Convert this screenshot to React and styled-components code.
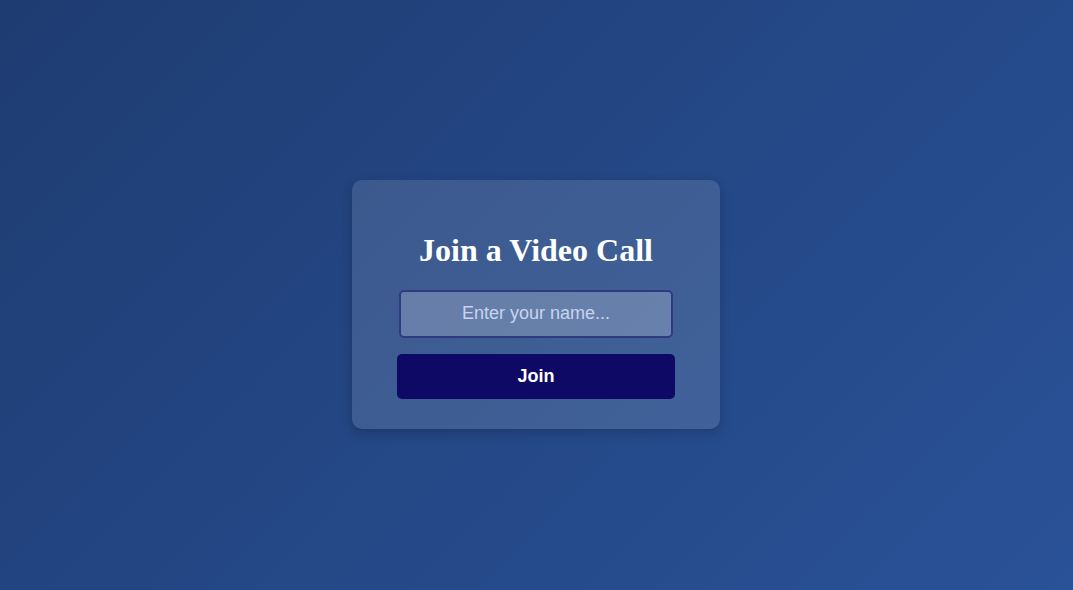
import React, { useState } from 'react';
import styled, { createGlobalStyle } from 'styled-components';

const GlobalStyle = createGlobalStyle`
  html {
    background: linear-gradient(135deg, #1e3c72 0%, #2a5298 100%);
    min-height: 100%;
  }

  body {
    margin: 8px;
    min-height: calc(100vh - 16px);
    display: flex;
    align-items: center;
    justify-content: center;
    font-family: "Liberation Serif", "Times New Roman", serif;
  }

  #root {
    display: flex;
    justify-content: center;
    align-items: center;
    padding: 18px 1px 0 0;
  }
`;

const Card = styled.div`
  width: 368px;
  box-sizing: border-box;
  padding: 30px 45px;
  background-color: rgba(255, 255, 255, 0.12);
  border-radius: 10px;
  box-shadow: 0 4px 12px rgba(0, 0, 0, 0.2);
  display: flex;
  flex-direction: column;
  align-items: center;
`;

const Title = styled.h1`
  margin: 22px 0 21px;
  font-family: "Liberation Serif", "Times New Roman", serif;
  font-size: 32px;
  font-weight: 700;
  color: #ffffff;
  text-align: center;
`;

const NameInput = styled.input`
  width: 274px;
  height: 48px;
  box-sizing: border-box;
  padding: 0 10px;
  border: 2px solid #2f3a80;
  border-radius: 5px;
  background-color: rgba(255, 255, 255, 0.21);
  color: #ffffff;
  font-family: "Liberation Sans", Arial, sans-serif;
  font-size: 18px;
  text-align: center;
  outline: none;

  &::placeholder {
    color: #c8d4ef;
  }
`;

const JoinButton = styled.button`
  margin-top: 16px;
  width: 100%;
  height: 45px;
  border: none;
  border-radius: 5px;
  background-color: #0f0966;
  color: #ffffff;
  font-family: "Liberation Sans", Arial, sans-serif;
  font-size: 18px;
  font-weight: 700;
  cursor: pointer;

  &:hover {
    background-color: #1a1380;
  }
`;

const App = () => {
  const [name, setName] = useState('');

  return (
    <>
      <GlobalStyle />
      <Card>
        <Title>Join a Video Call</Title>
        <NameInput
          type="text"
          placeholder="Enter your name..."
          value={name}
          onChange={(e) => setName(e.target.value)}
        />
        <JoinButton>Join</JoinButton>
      </Card>
    </>
  );
};

export default App;
